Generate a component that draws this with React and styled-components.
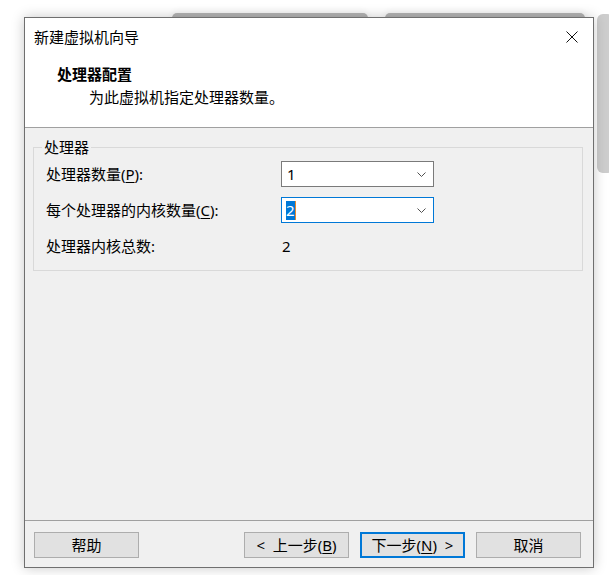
import React from "react";
import styled, { createGlobalStyle } from "styled-components";

const GlobalStyle = createGlobalStyle`
  html, body {
    margin: 0;
    padding: 0;
    background: #ffffff;
  }
  body {
    font-family: "Noto Sans", "Noto Sans CJK SC", sans-serif;
    font-size: 15px;
    color: #000000;
  }
`;

const Desktop = styled.div`
  position: relative;
  width: 609px;
  height: 575px;
  overflow: hidden;
  background: #ffffff;
`;

// pieces of the window that sits behind the dialog
const BackTab = styled.div`
  position: absolute;
  top: 13px;
  left: ${(p) => p.left}px;
  width: ${(p) => p.width}px;
  height: 8px;
  border-radius: 5px 5px 0 0;
  background: #b4b4b4;
  box-shadow: 0 -2px 6px rgba(0, 0, 0, 0.06);
`;

const BackScroll = styled.div`
  position: absolute;
  top: 14px;
  left: 597px;
  width: 16px;
  height: 159px;
  border-radius: 6px;
  background: #cdcdcd;
`;

const Dialog = styled.div`
  position: absolute;
  left: 24px;
  top: 17px;
  width: 568px;
  height: 549px;
  border: 1px solid #6f6f6f;
  background: #f0f0f0;
  display: flex;
  flex-direction: column;
  box-shadow: 0 0 12px rgba(0, 0, 0, 0.22);
`;

const Head = styled.div`
  background: #ffffff;
  border-bottom: 1px solid #a0a0a0;
  height: 109px;
  display: flex;
  flex-direction: column;
`;

const TitleBar = styled.div`
  height: 38px;
  display: flex;
  align-items: center;
  justify-content: space-between;
  padding: 0 15px 0 9px;
  line-height: 20px;
`;

const CloseButton = styled.div`
  width: 12px;
  height: 12px;
  display: flex;
  align-items: center;
  justify-content: center;
`;

const HeadTitle = styled.div`
  font-weight: 700;
  line-height: 20px;
  margin: 8px 0 0 32px;
`;

const HeadText = styled.div`
  line-height: 20px;
  margin: 3px 0 0 64px;
`;

const Body = styled.div`
  flex: 1;
  padding: 19px 10px 0 8px;
`;

const Group = styled.div`
  position: relative;
  border: 1px solid #d9d9d9;
  padding: 13px 12px 11px 12px;
  display: grid;
  grid-template-columns: 235px 153px;
  grid-auto-rows: 26px;
  row-gap: 10px;
  align-items: center;
`;

const Legend = styled.span`
  position: absolute;
  left: 8px;
  top: -11px;
  padding: 0 2px;
  line-height: 20px;
  background: #f0f0f0;
`;

const Label = styled.span`
  line-height: 20px;
`;

const Combo = styled.div`
  box-sizing: border-box;
  height: 26px;
  border: 1px solid ${(p) => (p.focused ? "#0078d7" : "#7a7a7a")};
  background: #ffffff;
  display: flex;
  align-items: center;
  justify-content: space-between;
  padding: 0 7px 0 5px;
  line-height: 20px;
`;

const Selected = styled.span`
  background: #0078d7;
  color: #ffffff;
  border-right: 1px solid #e88a2e;
  line-height: 19px;
  margin-left: -1px;
`;

const Value = styled.span`
  line-height: 20px;
  padding-left: 1px;
`;

const Footer = styled.div`
  border-top: 1px solid #a0a0a0;
  height: 47px;
  box-sizing: border-box;
  padding: 11px 12px 0 9px;
  display: flex;
  gap: 11px;
`;

const Button = styled.div`
  box-sizing: border-box;
  width: 105px;
  height: 26px;
  border: ${(p) => (p.primary ? "2px solid #0078d7" : "1px solid #adadad")};
  background: #e1e1e1;
  display: flex;
  align-items: center;
  justify-content: center;
  line-height: 20px;
  margin-left: ${(p) => (p.push ? "auto" : "0")};
`;

const U = styled.span`
  text-decoration: underline;
  text-underline-offset: 2px;
`;

const Chevron = () => (
  <svg width="9" height="5" viewBox="0 0 9 5">
    <path d="M0.5 0.5 L4.5 4.5 L8.5 0.5" fill="none" stroke="#505050" strokeWidth="1" />
  </svg>
);

export default function App() {
  return (
    <Desktop>
      <GlobalStyle />
      <BackTab left={172} width={196} />
      <BackTab left={385} width={200} />
      <BackScroll />
      <Dialog>
        <Head>
          <TitleBar>
            <span>新建虚拟机向导</span>
            <CloseButton>
              <svg width="12" height="12" viewBox="0 0 12 12">
                <path d="M0.5 0.5 L11.5 11.5 M11.5 0.5 L0.5 11.5" stroke="#111" strokeWidth="1" />
              </svg>
            </CloseButton>
          </TitleBar>
          <HeadTitle>处理器配置</HeadTitle>
          <HeadText>为此虚拟机指定处理器数量。</HeadText>
        </Head>
        <Body>
          <Group>
            <Legend>处理器</Legend>
            <Label>
              处理器数量(<U>P</U>):
            </Label>
            <Combo>
              <span>1</span>
              <Chevron />
            </Combo>
            <Label>
              每个处理器的内核数量(<U>C</U>):
            </Label>
            <Combo focused>
              <Selected>2</Selected>
              <Chevron />
            </Combo>
            <Label>处理器内核总数:</Label>
            <Value>2</Value>
          </Group>
        </Body>
        <Footer>
          <Button>帮助</Button>
          <Button push>
            &lt;&nbsp;&nbsp;上一步(<U>B</U>)
          </Button>
          <Button primary>
            下一步(<U>N</U>)&nbsp;&nbsp;&gt;
          </Button>
          <Button>取消</Button>
        </Footer>
      </Dialog>
    </Desktop>
  );
}
